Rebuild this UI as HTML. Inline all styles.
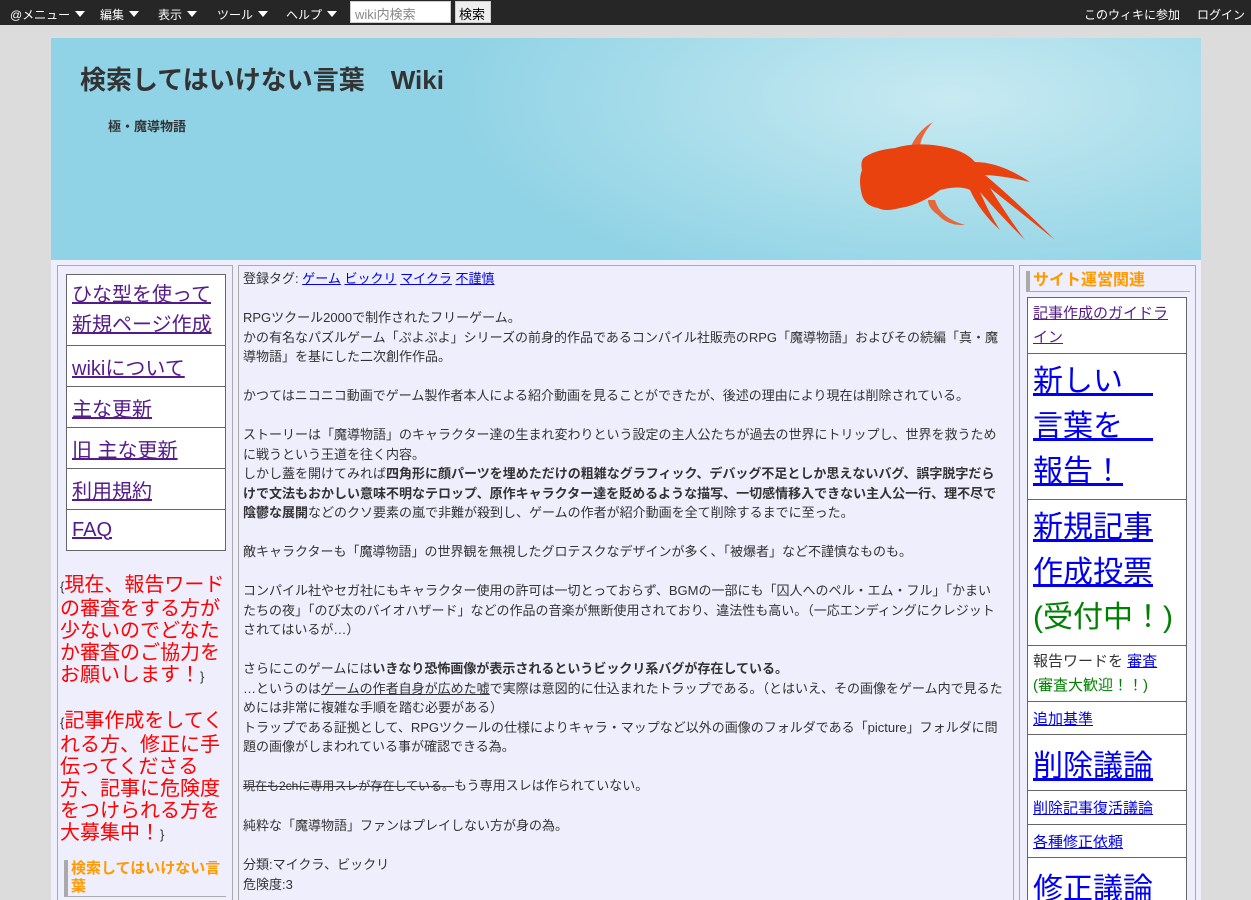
<!DOCTYPE html>
<html><head><meta charset="utf-8"><style>
*{box-sizing:border-box}
html{height:900px;overflow:hidden}
body{margin:0;background:#dcdcdc;font-family:"Liberation Sans","Noto Sans CJK JP",sans-serif;font-size:13px;color:#333;width:1251px;height:900px;overflow:hidden;position:relative}
#bar{position:absolute;left:0;top:0;width:1251px;height:25px;background:#262626;color:#fff;font-size:12px}
#bar span{position:absolute;top:6px;white-space:nowrap}
.tri{display:inline-block;width:0;height:0;border-left:5px solid transparent;border-right:5px solid transparent;border-top:6px solid #fff;margin-left:5px;vertical-align:2px}
#hdr{position:absolute;left:51px;top:38px;width:1150px;height:222px;background:radial-gradient(ellipse 500px 200px at 900px 60px,#c8eaf2,#a6dcea 60%,#90d3e6 100%),#90d3e6}
#hdr h1{position:absolute;left:29px;top:22px;margin:0;font-size:26px;font-weight:bold;color:#333;white-space:pre}
#hdr h2{position:absolute;left:57px;top:78px;margin:0;font-size:13px;font-weight:bold;color:#333}
#main{position:absolute;left:51px;top:260px;width:1150px;height:640px;background:#eeeefc;overflow:hidden}
.col{position:absolute;top:5px;height:635px;border:1px solid #aaa;border-bottom:none;overflow:hidden}
table{border-collapse:collapse;background:#fff}
td{border:1px solid #666;padding:0 5px}
a{color:#00e}
.l a{color:#551a8b}
#c p{margin:0}
.red{color:#f00;font-size:20px;line-height:22px}
.br{font-size:13px;color:#333}
h3{margin:0;color:#f90;font-size:16px;font-weight:bold;border-left:4px solid #aaa;border-bottom:1px solid #aaa;padding-left:3px;line-height:20px}
</style></head><body>
<div id="bar">
<span style="left:10px">@メニュー<i class="tri"></i></span>
<span style="left:100px">編集<i class="tri"></i></span>
<span style="left:158px">表示<i class="tri"></i></span>
<span style="left:217px">ツール<i class="tri"></i></span>
<span style="left:286px">ヘルプ<i class="tri"></i></span>
<div style="position:absolute;left:350px;top:1px;width:101px;height:22px;background:#fff;border:1px solid #ccc;color:#888;font-size:13px;padding:2px 4px">wiki内検索</div>
<div style="position:absolute;left:455px;top:1px;width:36px;height:22px;background:#eee;border:1px solid #ccc;color:#000;font-size:13px;padding:2px 3px">検索</div>
<span style="left:1084px">このウィキに参加</span>
<span style="left:1197px">ログイン</span>
</div>
<div id="hdr">
<h1>検索してはいけない言葉　Wiki</h1>
<h2>極・魔導物語</h2>
<svg style="position:absolute;left:789px;top:62px" width="230" height="160" viewBox="0 0 230 160">
<path d="M70 48 Q78 30 93 22 Q82 34 80 45Z" fill="#e8673a"/>
<path d="M95 100 Q100 118 125 125 Q108 126 98 115 Q88 108 88 100Z" fill="#e8673a"/>
<path d="M25 57 Q35 50 55 48 Q75 42 100 46 Q125 50 135 62 Q160 62 190 82 Q165 76 145 75 Q175 100 215 140 Q180 112 150 88 Q170 120 185 140 Q160 115 140 92 Q150 115 160 130 Q140 112 130 90 Q120 85 100 90 Q80 105 60 108 Q45 112 38 108 Q25 106 22 95 Q18 80 22 70 Q20 60 25 57Z" fill="#e9420f"/>
</svg>
</div>
<div id="main">
<div class="col l" style="left:6px;width:176px">
<table style="position:absolute;left:8px;top:8px;width:160px;font-size:20px">
<tr><td style="height:71px;line-height:30px"><a href="#">ひな型を使って新規ページ作成</a></td></tr>
<tr><td style="height:41px"><a href="#">wikiについて</a></td></tr>
<tr><td style="height:41px"><a href="#">主な更新</a></td></tr>
<tr><td style="height:41px"><a href="#">旧 主な更新</a></td></tr>
<tr><td style="height:41px"><a href="#">利用規約</a></td></tr>
<tr><td style="height:41px"><a href="#">FAQ</a></td></tr>
</table>
<div style="position:absolute;left:2px;top:308px;width:168px" class="red"><span class="br">{</span>現在、報告ワードの審査をする方が少ないのでどなたか審査のご協力をお願いします！<span class="br">}</span><br><br><span class="br">{</span>記事作成をしてくれる方、修正に手伝ってくださる方、記事に危険度をつけられる方を大募集中！<span class="br">}</span></div>
<h3 style="position:absolute;left:6px;top:594px;width:162px;font-size:15px;line-height:18px">検索してはいけない言葉</h3>
</div>
<div class="col" id="c" style="left:187px;width:776px;padding:3px 10px 3px 4px;line-height:19.5px">
<p>登録タグ: <a href="#">ゲーム</a> <a href="#">ビックリ</a> <a href="#">マイクラ</a> <a href="#">不謹慎</a></p><br>
<p>RPGツクール2000で制作されたフリーゲーム。<br>かの有名なパズルゲーム「ぷよぷよ」シリーズの前身的作品であるコンパイル社販売のRPG「魔導物語」およびその続編「真・魔導物語」を基にした二次創作作品。</p><br>
<p>かつてはニコニコ動画でゲーム製作者本人による紹介動画を見ることができたが、後述の理由により現在は削除されている。</p><br>
<p>ストーリーは「魔導物語」のキャラクター達の生まれ変わりという設定の主人公たちが過去の世界にトリップし、世界を救うために戦うという王道を往く内容。<br>しかし蓋を開けてみれば<b>四角形に顔パーツを埋めただけの粗雑なグラフィック、デバッグ不足としか思えないバグ、誤字脱字だらけで文法もおかしい意味不明なテロップ、原作キャラクター達を貶めるような描写、一切感情移入できない主人公一行、理不尽で陰鬱な展開</b>などのクソ要素の嵐で非難が殺到し、ゲームの作者が紹介動画を全て削除するまでに至った。</p><br>
<p>敵キャラクターも「魔導物語」の世界観を無視したグロテスクなデザインが多く、「被爆者」など不謹慎なものも。</p><br>
<p>コンパイル社やセガ社にもキャラクター使用の許可は一切とっておらず、BGMの一部にも「囚人へのペル・エム・フル」「かまいたちの夜」「のび太のバイオハザード」などの作品の音楽が無断使用されており、違法性も高い。（一応エンディングにクレジットされてはいるが…）</p><br>
<p>さらにこのゲームには<b>いきなり恐怖画像が表示されるというビックリ系バグが存在している。</b><br>…というのは<u>ゲームの作者自身が広めた嘘</u>で実際は意図的に仕込まれたトラップである。（とはいえ、その画像をゲーム内で見るためには非常に複雑な手順を踏む必要がある）<br>トラップである証拠として、RPGツクールの仕様によりキャラ・マップなど以外の画像のフォルダである「picture」フォルダに問題の画像がしまわれている事が確認できる為。</p><br>
<p><s style="font-size:12px">現在も2chに専用スレが存在している。</s>もう専用スレは作られていない。</p><br>
<p>純粋な「魔導物語」ファンはプレイしない方が身の為。</p><br>
<p>分類:マイクラ、ビックリ<br>危険度:3</p>
</div>
<div class="col" style="left:968px;width:177px">
<h3 style="position:absolute;left:6px;top:5px;width:164px">サイト運営関連</h3>
<table style="position:absolute;left:7px;top:31px;width:160px">
<tr><td style="height:56px;font-size:15px;line-height:24px"><a href="#" style="color:#551a8b">記事作成のガイドライン</a></td></tr>
<tr><td style="height:146px;font-size:30px;line-height:45px"><a href="#">新しい　言葉を　報告！</a></td></tr>
<tr><td style="height:146px;font-size:30px;line-height:45px"><a href="#">新規記事作成投票</a><br><span style="color:green">(受付中！)</span></td></tr>
<tr><td style="height:56px;font-size:15px;line-height:24px">報告ワードを <a href="#">審査</a><br><span style="color:green">(審査大歓迎！！)</span></td></tr>
<tr><td style="height:33px;font-size:15px"><a href="#">追加基準</a></td></tr>
<tr><td style="height:56px;font-size:30px"><a href="#">削除議論</a></td></tr>
<tr><td style="height:34px;font-size:15px"><a href="#">削除記事復活議論</a></td></tr>
<tr><td style="height:33px;font-size:15px"><a href="#">各種修正依頼</a></td></tr>
<tr><td style="height:56px;font-size:30px"><a href="#">修正議論</a></td></tr>
</table>
</div>
</div>
</body></html>
